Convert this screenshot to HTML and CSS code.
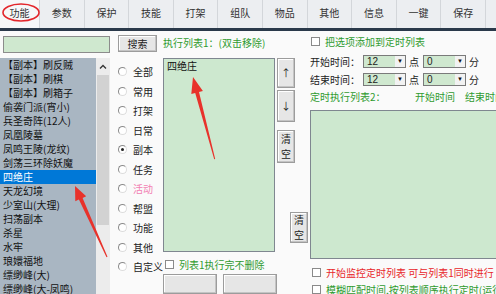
FILE: index.html
```html
<!DOCTYPE html>
<html lang="zh-CN">
<head>
<meta charset="UTF-8">
<title>功能</title>
<link rel="stylesheet" href="styles.css">
</head>
<body>
<div class="tabs">
    <div class="tab first">功能</div>
    <div class="tab">参数</div>
    <div class="tab">保护</div>
    <div class="tab">技能</div>
    <div class="tab">打架</div>
    <div class="tab">组队</div>
    <div class="tab">物品</div>
    <div class="tab">其他</div>
    <div class="tab">信息</div>
    <div class="tab">一键</div>
    <div class="tab">保存</div>
</div>

<div class="main">
    <!-- 左边: 搜索 + 副本列表 -->
    <div class="left">
        <div class="search"></div>
        <div class="list">
            <ul class="items">
                <li>【副本】刷反贼</li>
                <li>【副本】刷棋</li>
                <li>【副本】刷箱子</li>
                <li>偷袭门派(宵小)</li>
                <li>兵圣奇阵(12人)</li>
                <li>凤凰陵墓</li>
                <li>凤鸣王陵(龙纹)</li>
                <li>剑荡三环除妖魔</li>
                <li class="sel">四绝庄</li>
                <li>天龙幻境</li>
                <li>少室山(大理)</li>
                <li>扫荡副本</li>
                <li>杀星</li>
                <li>水牢</li>
                <li>琅嬛福地</li>
                <li>缥缈峰(大)</li>
                <li>缥缈峰(大-凤鸣)</li>
            </ul>
            <div class="scroll">
                <div class="up">
                    <svg width="8" height="5" viewBox="0 0 8 5"><path d="M1 4.5 L4 1.5 L7 4.5" fill="none" stroke="#333" stroke-width="1.3"/></svg>
                </div>
                <div class="thumb"></div>
            </div>
        </div>
    </div>

    <!-- 分类 -->
    <div class="kinds">
        <div class="btn search-btn">搜索</div>
        <div class="radio"><span class="dot"></span>全部</div>
        <div class="radio"><span class="dot"></span>常用</div>
        <div class="radio"><span class="dot"></span>打架</div>
        <div class="radio"><span class="dot"></span>日常</div>
        <div class="radio"><span class="dot on"></span>副本</div>
        <div class="radio"><span class="dot"></span>任务</div>
        <div class="radio pink"><span class="dot"></span>活动</div>
        <div class="radio"><span class="dot"></span>帮盟</div>
        <div class="radio"><span class="dot"></span>功能</div>
        <div class="radio"><span class="dot"></span>其他</div>
        <div class="radio"><span class="dot"></span>自定义</div>
    </div>

    <!-- 执行列表1 -->
    <div class="mid">
        <div class="caption green">执行列表1：(双击移除)</div>
        <div class="row1">
            <div class="list1">四绝庄</div>
            <div class="btns">
                <div class="btn up-btn">↑</div>
                <div class="btn down-btn">↓</div>
                <div class="btn clear">清<br>空</div>
                <div class="btn clear clear2">清<br>空</div>
            </div>
        </div>
        <div class="check green keep"><span class="box"></span>列表1执行完不删除</div>
        <div class="btnrow">
            <div class="btn wide"></div>
            <div class="btn wide"></div>
        </div>
    </div>

    <!-- 定时 -->
    <div class="right">
        <div class="check green top-check"><span class="box"></span>把选项添加到定时列表</div>
        <div class="time first-time">
            <span class="tlabel">开始时间：</span>
            <div class="combo">12<span class="drop">▼</span></div>
            <span class="unit">点</span>
            <div class="combo">0<span class="drop">▼</span></div>
            <span class="unit">分</span>
        </div>
        <div class="time">
            <span class="tlabel">结束时间：</span>
            <div class="combo">12<span class="drop">▼</span></div>
            <span class="unit">点</span>
            <div class="combo">0<span class="drop">▼</span></div>
            <span class="unit">分</span>
        </div>
        <div class="caption2 green">
            <span class="c2name">定时执行列表2：</span>
            <span>开始时间</span>
            <span class="c2end">结束时间</span>
        </div>
        <div class="list2"></div>
        <div class="check red watch"><span class="box"></span>开始监控定时列表 可与列表1同时进行</div>
        <div class="check green fuzzy"><span class="box"></span>模糊匹配时间,按列表顺序执行定时(运行</div>
    </div>
</div>

<!-- 红色标注 -->
<svg class="marks" width="496" height="294" viewBox="0 0 496 294">
    <ellipse cx="21" cy="12.5" rx="18" ry="8.5" fill="none" stroke="#e3262b" stroke-width="1.6"/>
    <polygon points="75,186 86.2,196.3 82.6,197.9 107.5,256.8 106.5,257.2 78.9,199.6 75.3,201.2" fill="#e8322b"/>
    <polygon points="193,77 202.9,91 199,92 215.2,159.1 214.2,159.3 195.2,93 191.3,94" fill="#e8322b"/>
</svg>
</body>
</html>
```

FILE: styles.css
```css
body {
    margin: 0;
    width: 496px;
    height: 294px;
    overflow: hidden;
    position: relative;
    background: #fafafa;
    font-family: "Noto Sans CJK SC", sans-serif;
    font-size: 10px;
    color: #111;
}

/* 顶部标签 */
.tabs {
    display: flex;
    height: 28px;
    background: #eceef1;
    border-bottom: 3px solid #2a394a;
}
.tab {
    width: 44.6px;
    flex: none;
    box-sizing: border-box;
    line-height: 25px;
    text-align: center;
    color: #333;
    border-right: 1px solid #d3d6da;
}
.tab.first {
    width: 40px;
    background: #f6f7f8;
}

.main {
    display: flex;
    height: 263px;
}

/* 左边 */
.left {
    width: 110px;
    display: flex;
    flex-direction: column;
}
.search {
    margin: 5px 0 0 3px;
    width: 107px;
    height: 17px;
    box-sizing: border-box;
    border: 1px solid #8c8c8c;
    background: #cfe8cf;
}
.list {
    margin-top: 5px;
    flex: 1;
    display: flex;
    background: #a9b6c2;
    overflow: hidden;
}
.items {
    flex: 1;
    list-style: none;
    margin: 0;
    padding: 0;
}
.items li {
    height: 14px;
    line-height: 14px;
    padding-left: 3px;
    white-space: nowrap;
    overflow: hidden;
}
.items li.sel {
    background: #0078d7;
    color: #fff;
}
.scroll {
    width: 14px;
    background: #ececec;
    display: flex;
    flex-direction: column;
}
.scroll .up {
    height: 17px;
    display: flex;
    align-items: center;
    justify-content: center;
}
.scroll .thumb {
    height: 150px;
    margin: 0 1px;
    background: #d2d2d2;
}

/* 按钮 */
.btn {
    box-sizing: border-box;
    background: #e6e6e6;
    border: 1px solid #9c9c9c;
    box-shadow: inset -1px -1px 0 #c4c4c4, inset 1px 1px 0 #fff;
    text-align: center;
    color: #222;
}

/* 分类 */
.kinds {
    width: 53px;
    padding-left: 8px;
    box-sizing: border-box;
}
.search-btn {
    margin-top: 4px;
    width: 39px;
    height: 17px;
    line-height: 15px;
    margin-bottom: 10px;
}
.radio {
    height: 19.5px;
    display: flex;
    align-items: center;
    white-space: nowrap;
    color: #222;
}
.radio.pink {
    color: #f27fb2;
}
.dot {
    width: 9px;
    height: 9px;
    box-sizing: border-box;
    border-radius: 50%;
    border: 1px solid #dcdcdc;
    border-top-color: #8a8a8a;
    border-left-color: #8a8a8a;
    background: #fff;
    margin-right: 6px;
    display: flex;
    align-items: center;
    justify-content: center;
}
.dot.on::after {
    content: "";
    width: 3px;
    height: 3px;
    border-radius: 50%;
    background: #222;
}

.green {
    color: #2f9a2f;
}
.red {
    color: #e8262a;
}

/* 中间 */
.mid {
    width: 147px;
    display: flex;
    flex-direction: column;
}
.caption {
    padding-top: 6px;
    line-height: 12px;
    white-space: nowrap;
}
.row1 {
    margin-top: 9px;
    height: 209px;
    display: flex;
}
.list1 {
    width: 112px;
    box-sizing: border-box;
    background: #cde8cf;
    border: 1px solid #7f8790;
    padding: 1px 3px;
    line-height: 12px;
}
.btns {
    margin-left: 2px;
    width: 33px;
    display: flex;
    flex-direction: column;
}
.btns .btn {
    width: 18px;
}
.up-btn {
    height: 30px;
    line-height: 28px;
}
.down-btn {
    margin-top: 2px;
    height: 32px;
    line-height: 30px;
}
.clear {
    margin-top: 8px;
    height: 33px;
    line-height: 15px;
    font-size: 10px;
}
.clear2 {
    margin-top: auto;
    margin-left: 13px;
    margin-bottom: 9px;
    height: 31px;
    line-height: 14.5px;
}
.check {
    display: flex;
    align-items: center;
    height: 10px;
    white-space: nowrap;
}
.box {
    width: 9px;
    height: 9px;
    box-sizing: border-box;
    border: 1px solid #8a8a8a;
    background: #fff;
    margin-right: 5px;
    flex: none;
}
.keep {
    margin-top: 7px;
    padding-left: 2px;
}
.btnrow {
    margin-top: 5px;
    display: flex;
    gap: 6px;
}
.btn.wide {
    width: 54px;
    height: 20px;
}

/* 右边 */
.right {
    flex: 1;
    display: flex;
    flex-direction: column;
    white-space: nowrap;
}
.top-check {
    margin-top: 5px;
    padding-left: 1px;
}
.time {
    display: flex;
    align-items: center;
    height: 13px;
    margin-top: 5px;
    color: #222;
}
.first-time {
    margin-top: 9px;
}
.tlabel {
    width: 53px;
}
.combo {
    width: 43px;
    height: 13px;
    box-sizing: border-box;
    border: 1px solid #7a7a7a;
    background: #cfe8cf;
    padding-left: 3px;
    line-height: 11px;
    display: flex;
    justify-content: space-between;
    font-family: "Liberation Sans", sans-serif;
}
.drop {
    width: 10px;
    background: #f2f2f2;
    font-size: 6px;
    text-align: center;
    line-height: 11px;
    color: #111;
}
.unit {
    width: 17px;
    padding-left: 3px;
    box-sizing: border-box;
}
.caption2 {
    margin-top: 5px;
    line-height: 12px;
    display: flex;
}
.c2name {
    width: 105px;
}
.c2end {
    margin-left: 10px;
}
.list2 {
    margin-top: 7px;
    width: 192px;
    height: 149px;
    box-sizing: border-box;
    background: #cde8cf;
    border: 1px solid #7f8790;
}
.watch {
    margin-top: 8px;
    padding-left: 2px;
}
.fuzzy {
    margin-top: 7px;
    padding-left: 2px;
}

/* 标注 */
.marks {
    position: absolute;
    left: 0;
    top: 0;
    pointer-events: none;
}
```
